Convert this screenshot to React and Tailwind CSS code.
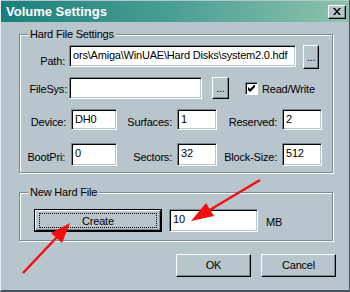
const FACE = 'bg-[#b9c5cd]';

const Sunken = ({ className = '', children }) => (
  <div
    className={`bg-white border border-t-[#7a8894] border-l-[#7a8894] border-b-white border-r-white shadow-[inset_1px_1px_0_#000,inset_-1px_-1px_0_#b9c5cd] pl-[3px] pt-[2px] leading-[14px] text-black overflow-hidden whitespace-nowrap ${className}`}
  >
    {children}
  </div>
);

const Raised = ({ className = '', children }) => (
  <div
    className={`${FACE} border border-t-white border-l-white border-b-black border-r-black shadow-[inset_-1px_-1px_0_#7a8894] flex items-center justify-center ${className}`}
  >
    {children}
  </div>
);

const Group = ({ title, className = '', children }) => (
  <div
    className={`ml-[18px] w-[314px] border border-[#7a8894] shadow-[inset_1px_1px_0_#fff,1px_1px_0_#fff] ${className}`}
  >
    <div className="flex">
      <span className={`ml-[8px] -mt-[8px] px-[2px] h-[14px] leading-[14px] ${FACE}`}>{title}</span>
    </div>
    {children}
  </div>
);

const Label = ({ w, children }) => (
  <div className={`${w} text-right pr-[1px] leading-[14px]`}>{children}</div>
);

const Arrows = () => (
  <svg className="absolute inset-0 pointer-events-none" width="350" height="292">
    <g stroke="#f01010" strokeWidth="2.5" fill="#f01010">
      <line x1="259" y1="180" x2="207" y2="211" />
      <polygon points="190,221 213,216 205,203" stroke="none" />
      <line x1="22" y1="273" x2="57" y2="236" />
      <polygon points="69,223 61,243 50,233" stroke="none" />
    </g>
  </svg>
);

const App = () => (
  <div
    className={`relative w-[350px] h-[292px] ${FACE} border-l border-l-[#e4eaee] border-b-2 border-b-[#4a545c] border-r border-r-[#4a545c] text-[11px] tracking-[-0.2px] text-black overflow-hidden`}
    style={{ fontFamily: '"Liberation Sans", Arial, sans-serif' }}
  >
    {/* title bar */}
    <div className="h-[21px] mt-[1px] bg-linear-to-r from-[#17807c] via-[#4a9f94] to-[#8cc4ab] flex items-center pl-[5px] pr-[3px]">
      <span className="text-white font-bold text-[13px] tracking-[0px] leading-[16px]">Volume Settings</span>
      <Raised className="ml-auto w-[18px] h-[14px]">
        <svg width="8" height="7" viewBox="0 0 8 7">
          <path d="M0 0h2l2 2.5 2-2.5h2l-3 3.5 3 3.5h-2l-2-2.5-2 2.5h-2l3-3.5z" fill="#000" />
        </svg>
      </Raised>
    </div>

    {/* hard file settings */}
    <Group title="Hard File Settings" className="mt-[12px] h-[139px]">
      <div className="flex items-start mt-[4px]">
        <Label w="w-[46px]">
          <div className="pt-[9px]">Path:</div>
        </Label>
        <Sunken className="ml-[3px] w-[227px] h-[22px]">ors\Amiga\WinUAE\Hard Disks\system2.0.hdf</Sunken>
        <Raised className="ml-[7px] w-[16px] h-[24px]">
          <span className="leading-[10px]">...</span>
        </Raised>
      </div>

      <div className="flex items-start mt-[8px]">
        <Label w="w-[48px]">
          <div className="pt-[5px]">FileSys:</div>
        </Label>
        <Sunken className="ml-[1px] w-[133px] h-[22px]" />
        <Raised className="ml-[10px] w-[17px] h-[22px]">
          <span className="leading-[10px]">...</span>
        </Raised>
        <div className="ml-[16px] mt-[5px] w-[13px] h-[13px] bg-white border border-t-[#7a8894] border-l-[#7a8894] border-b-white border-r-white shadow-[inset_1px_1px_0_#000] flex items-center justify-center">
          <svg width="7" height="7" viewBox="0 0 7 7">
            <path d="M0 2v3l2 2 5-5v-3l-5 5z" fill="#000" />
          </svg>
        </div>
        <span className="ml-[4px] mt-[5px] leading-[14px]">Read/Write</span>
      </div>

      <div className="flex items-start mt-[10px] h-[21px]">
        <Label w="w-[47px]">
          <div className="pt-[6px]">Device:</div>
        </Label>
        <Sunken className="ml-[4px] w-[46px] h-[21px]">DH0</Sunken>
        <Label w="w-[56px]">
          <div className="pt-[6px]">Surfaces:</div>
        </Label>
        <Sunken className="ml-[4px] w-[40px] h-[21px]">1</Sunken>
        <Label w="w-[61px]">
          <div className="pt-[6px]">Reserved:</div>
        </Label>
        <Sunken className="ml-[4px] w-[40px] h-[21px]">2</Sunken>
      </div>

      <div className="flex items-start mt-[13px] h-[23px]">
        <Label w="w-[46px]">
          <div className="pt-[7px]">BootPri:</div>
        </Label>
        <Sunken className="ml-[5px] w-[46px] h-[23px]">0</Sunken>
        <Label w="w-[56px]">
          <div className="pt-[7px]">Sectors:</div>
        </Label>
        <Sunken className="ml-[4px] w-[40px] h-[23px]">32</Sunken>
        <Label w="w-[61px]">
          <div className="pt-[7px]">Block-Size:</div>
        </Label>
        <Sunken className="ml-[4px] w-[40px] h-[23px]">512</Sunken>
      </div>
    </Group>

    {/* new hard file */}
    <Group title="New Hard File" className="mt-[19px] h-[49px]">
      <div className="flex items-start mt-[10px]">
        <div className="ml-[14px] w-[128px] h-[23px] border border-black">
          <Raised className="w-full h-full">
            <div className="w-[118px] h-[15px] border border-dotted border-black flex items-center justify-center leading-[12px]">
              Create
            </div>
          </Raised>
        </div>
        <Sunken className="ml-[7px] w-[89px] h-[23px]">10</Sunken>
        <span className="ml-[8px] mt-[6px] leading-[14px]">MB</span>
      </div>
    </Group>

    {/* buttons */}
    <div className="flex mt-[13px] pl-[175px] gap-[10px]">
      <Raised className="w-[75px] h-[23px]">OK</Raised>
      <Raised className="w-[75px] h-[23px]">Cancel</Raised>
    </div>

    <Arrows />
  </div>
);

export default App;
